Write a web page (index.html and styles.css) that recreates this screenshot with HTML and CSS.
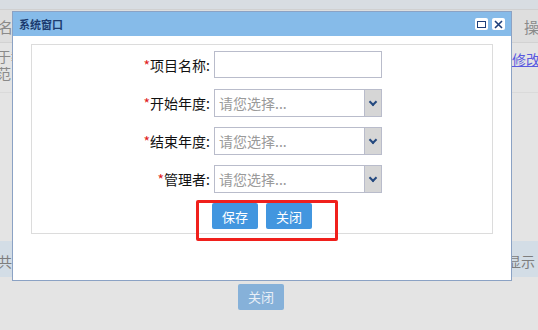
FILE: index.html
```html
<!DOCTYPE html>
<html lang="zh">
<head>
  <meta charset="UTF-8" />
  <title>系统窗口</title>
  <link rel="stylesheet" href="styles.css">
</head>
<body>

  <div class="page">
    <div class="topbar"></div>
    <div class="thead">
      <span class="th-left">名称</span>
      <span class="th-right">操作</span>
    </div>
    <div class="trow">
      <div class="td-left">于教<br>范</div>
      <a class="td-link" href="#">修改</a>
    </div>
    <div class="pager">
      <span class="pg-left">共</span>
      <span class="pg-right">显示 1</span>
    </div>
    <div class="page-actions">
      <button class="btn btn-faded">关闭</button>
    </div>
  </div>

  <div class="dialog">
    <div class="dialog-title">
      <span class="dialog-name">系统窗口</span>
      <span class="tool tool-max"><span class="max-box"></span></span>
      <span class="tool tool-close">
        <svg width="9" height="9" viewBox="0 0 9 9"><path d="M1 1 L8 8 M8 1 L1 8" stroke="#1f3f7a" stroke-width="1.6"/></svg>
      </span>
    </div>
    <div class="dialog-body">
      <div class="panel">
        <div class="form-row">
          <label><i>*</i>项目名称:</label>
          <input type="text" class="field" />
        </div>
        <div class="form-row">
          <label><i>*</i>开始年度:</label>
          <div class="combo"><span class="combo-text">请您选择...</span><span class="combo-arrow"></span></div>
        </div>
        <div class="form-row">
          <label><i>*</i>结束年度:</label>
          <div class="combo"><span class="combo-text">请您选择...</span><span class="combo-arrow"></span></div>
        </div>
        <div class="form-row">
          <label><i>*</i>管理者:</label>
          <div class="combo"><span class="combo-text">请您选择...</span><span class="combo-arrow"></span></div>
        </div>
        <div class="actions">
          <button class="btn">保存</button>
          <button class="btn">关闭</button>
        </div>
        <div class="highlight"></div>
      </div>
    </div>
  </div>

</body>
</html>
```

FILE: styles.css
```css
body {
  margin: 0;
  width: 538px;
  height: 330px;
  overflow: hidden;
  background: #e4e4e4;
  font-family: "Noto Sans CJK SC", "Liberation Sans", sans-serif;
  position: relative;
}
.page {
  display: flex;
  flex-direction: column;
  height: 330px;
}
.topbar {
  height: 9px;
  background: #d8dde2;
  border-bottom: 1px solid #d0d0d0;
}
.thead {
  height: 32px;
  background: #dedede;
  display: flex;
  justify-content: space-between;
  align-items: center;
  font-size: 15px;
  color: #8a8a8a;
  border-bottom: 1px solid #d2d2d2;
}
.th-left {
  margin-left: -2px;
}
.th-right {
  margin-right: -16px;
}
.trow {
  height: 44px;
  display: flex;
  justify-content: space-between;
  font-size: 14px;
  line-height: 17px;
  color: #8a8a8a;
  padding-top: 5px;
  border-bottom: 1px solid #dadada;
}
.td-left {
  margin-left: -3px;
}
.td-link {
  color: #5a5ae0;
  margin-top: 3px;
  margin-right: -2px;
}
.pager {
  margin-top: 148px;
  height: 36px;
  background: #d3dde6;
  display: flex;
  justify-content: space-between;
  align-items: center;
  font-size: 14px;
  color: #7e7e7e;
  padding-top: 4px;
  box-sizing: border-box;
}
.pg-left {
  margin-left: -2px;
}
.pg-right {
  margin-right: -8px;
}
.page-actions {
  padding: 6px 0 0 238px;
}
.btn {
  width: 46px;
  height: 26px;
  background: #4296df;
  color: #fff;
  border: none;
  border-radius: 2px;
  font-family: "Noto Sans CJK SC", "Liberation Sans", sans-serif;
  font-size: 13px;
  padding: 0;
}
.btn-faded {
  background: #86b1d9;
  color: #e8eff7;
}

.dialog {
  position: absolute;
  left: 12px;
  top: 11px;
  width: 498px;
  height: 268px;
  background: #fff;
  border: 1px solid #8ba2c4;
}
.dialog-title {
  height: 24px;
  background: #86bbe9;
  display: flex;
  align-items: center;
  padding: 0 6px 0 6px;
}
.dialog-name {
  font-size: 11px;
  font-weight: bold;
  color: #1c3b70;
  flex: 1;
}
.tool {
  width: 13px;
  height: 12px;
  background: #fff;
  border-radius: 2px;
  display: flex;
  align-items: center;
  justify-content: center;
  margin-left: 4px;
}
.max-box {
  width: 7px;
  height: 5px;
  border: 1.5px solid #1f3f7a;
}
.dialog-body {
  padding: 8px 18px 0 18px;
}
.panel {
  position: relative;
  height: 190px;
  border: 1px solid #dcdcdc;
  padding-top: 6px;
  box-sizing: border-box;
}
.form-row {
  display: flex;
  align-items: center;
  height: 27px;
  margin-bottom: 11px;
}
.form-row label {
  width: 178px;
  text-align: right;
  font-size: 14px;
  color: #111;
  padding-right: 4px;
}
.form-row label i {
  font-style: normal;
  color: #e02020;
}
.field {
  width: 168px;
  height: 27px;
  box-sizing: border-box;
  border: 1px solid #b9bccb;
  margin: 0;
}
.combo {
  width: 168px;
  height: 28px;
  box-sizing: border-box;
  border: 1px solid #b9bccb;
  display: flex;
  align-items: center;
}
.combo-text {
  flex: 1;
  font-size: 14px;
  color: #9a9a9a;
  padding-left: 4px;
}
.combo-arrow {
  width: 16px;
  height: 100%;
  background: #d6d6d6;
  border-left: 1px solid #b9bccb;
  position: relative;
}
.combo-arrow::after {
  content: "";
  position: absolute;
  left: 5px;
  top: 9px;
  width: 4px;
  height: 4px;
  border-right: 2px solid #24497f;
  border-bottom: 2px solid #24497f;
  transform: rotate(45deg);
}
.actions {
  display: flex;
  gap: 8px;
  padding-left: 180px;
  margin-top: 1px;
}
.highlight {
  position: absolute;
  left: 164px;
  top: 155px;
  width: 136px;
  height: 35px;
  border: 3px solid #f0201c;
  border-radius: 2px;
}
```
